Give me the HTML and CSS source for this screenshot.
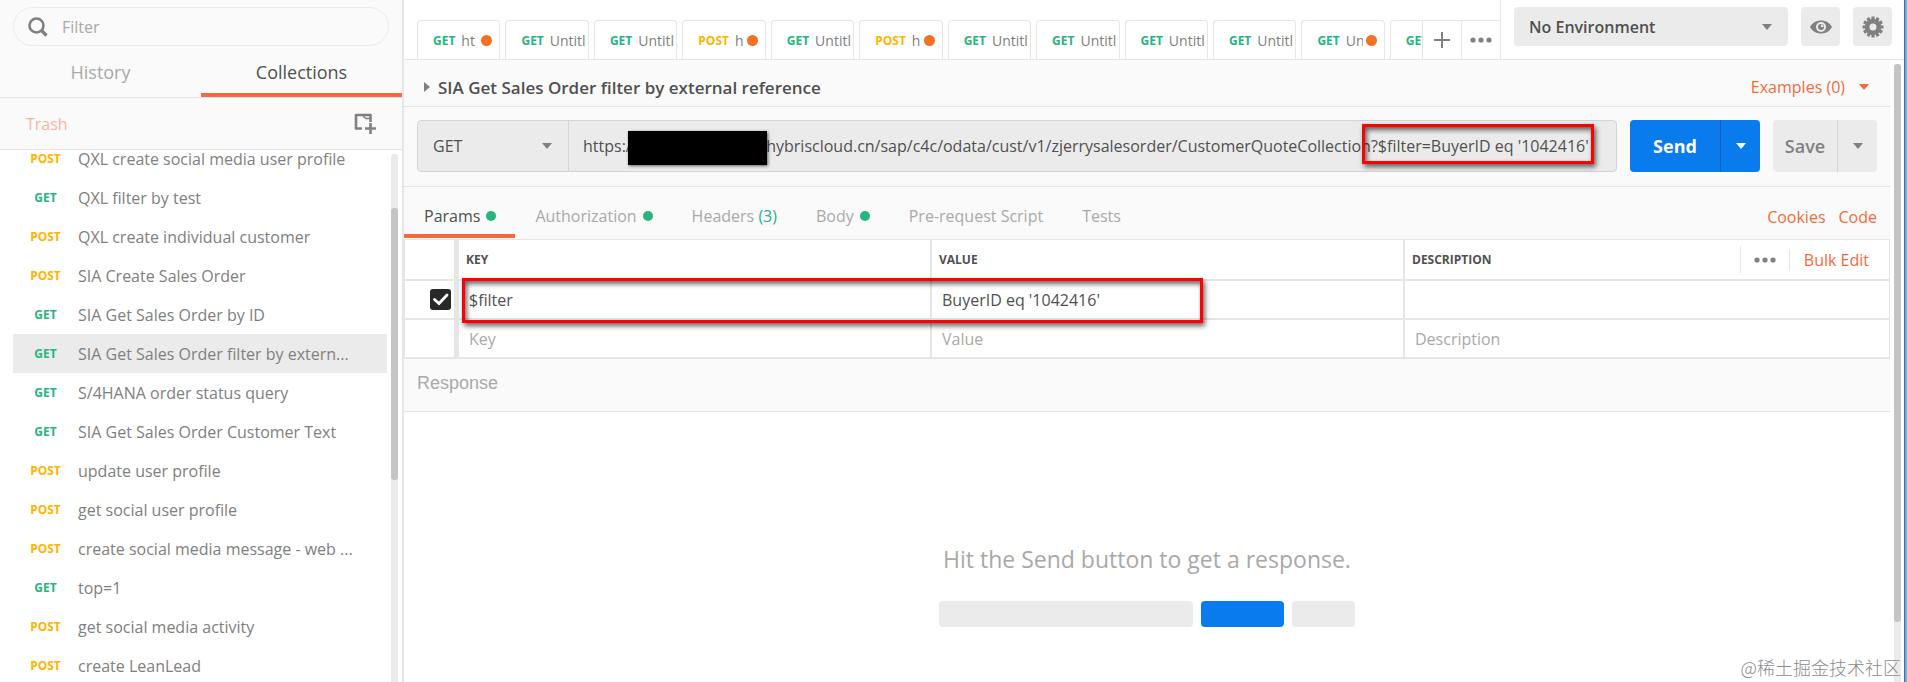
FILE: index.html
```html
<!DOCTYPE html>
<html lang="en">
<head>
<meta charset="utf-8">
<title>SIA Get Sales Order filter by external reference</title>
<link rel="stylesheet" href="styles.css">
</head>
<body>
<div class="app">
  <aside class="sidebar">
    <label class="search">
      <svg width="20" height="20" viewBox="0 0 20 20" fill="none" stroke="#808080"><circle cx="8.500" cy="8.500" r="7" stroke-width="2.600"/><path d="M13.500 13.500l5 5" stroke-width="3.200"/></svg>
      <input type="text" placeholder="Filter" aria-label="Filter">
    </label>
    <nav class="side-tabs">
      <button class="side-tab">History</button>
      <button class="side-tab side-tab-on">Collections</button>
    </nav>
    <div class="side-tools">
      <a class="trash" href="#trash">Trash</a>
      <button class="new-folder" aria-label="New collection">
        <svg width="22" height="22" viewBox="0 0 22 22" fill="none" stroke="#808080"><path d="M8 15.500H2V2H16.500V9" stroke-width="2.600" stroke-linejoin="round"/><path d="M9 3l3 2.500h4" stroke-width="1.600"/><path d="M16.500 10v11M11 15.500H22" stroke-width="2.600"/></svg>
      </button>
    </div>
    <div class="side-list">
      <ul class="requests">
        <li class="request"><span class="verb post">POST</span><span class="name">QXL create social media user profile</span></li>
        <li class="request"><span class="verb get">GET</span><span class="name">QXL filter by test</span></li>
        <li class="request"><span class="verb post">POST</span><span class="name">QXL create individual customer</span></li>
        <li class="request"><span class="verb post">POST</span><span class="name">SIA Create Sales Order</span></li>
        <li class="request"><span class="verb get">GET</span><span class="name">SIA Get Sales Order by ID</span></li>
        <li class="request request-on"><span class="verb get">GET</span><span class="name">SIA Get Sales Order filter by extern...</span></li>
        <li class="request"><span class="verb get">GET</span><span class="name">S/4HANA order status query</span></li>
        <li class="request"><span class="verb get">GET</span><span class="name">SIA Get Sales Order Customer Text</span></li>
        <li class="request"><span class="verb post">POST</span><span class="name">update user profile</span></li>
        <li class="request"><span class="verb post">POST</span><span class="name">get social user profile</span></li>
        <li class="request"><span class="verb post">POST</span><span class="name">create social media message - web ...</span></li>
        <li class="request"><span class="verb get">GET</span><span class="name">top=1</span></li>
        <li class="request"><span class="verb post">POST</span><span class="name">get social media activity</span></li>
        <li class="request"><span class="verb post">POST</span><span class="name">create LeanLead</span></li>
      </ul>
      <div class="track side-track"><div class="thumb side-thumb"></div></div>
    </div>
  </aside>

  <main class="main">
    <header class="topbar">
      <div class="tabs-area">
        <div class="tabs">
          <button class="tab"><span class="verb get">GET</span><span class="tab-name">ht</span><i class="unsaved"></i></button>
          <button class="tab"><span class="verb get">GET</span><span class="tab-name">Untitl</span></button>
          <button class="tab"><span class="verb get">GET</span><span class="tab-name">Untitl</span></button>
          <button class="tab"><span class="verb post">POST</span><span class="tab-name">h</span><i class="unsaved"></i></button>
          <button class="tab"><span class="verb get">GET</span><span class="tab-name">Untitl</span></button>
          <button class="tab"><span class="verb post">POST</span><span class="tab-name">h</span><i class="unsaved"></i></button>
          <button class="tab"><span class="verb get">GET</span><span class="tab-name">Untitl</span></button>
          <button class="tab"><span class="verb get">GET</span><span class="tab-name">Untitl</span></button>
          <button class="tab"><span class="verb get">GET</span><span class="tab-name">Untitl</span></button>
          <button class="tab"><span class="verb get">GET</span><span class="tab-name">Untitl</span></button>
          <button class="tab"><span class="verb get">GET</span><span class="tab-name">Un</span><i class="unsaved"></i></button>
          <button class="tab"><span class="verb get">GET</span></button>
        </div>
        <button class="tab-tool" aria-label="New tab"><svg width="16" height="16" viewBox="0 0 16 16" stroke="#808080" stroke-width="2"><path d="M8 0v16M0 8h16"/></svg></button>
        <button class="tab-tool tab-more" aria-label="Tab options"><svg width="22" height="6" viewBox="0 0 22 6" fill="#808080"><circle cx="3" cy="3" r="2.600"/><circle cx="11" cy="3" r="2.600"/><circle cx="19" cy="3" r="2.600"/></svg></button>
      </div>
      <div class="env">
        <div class="env-select caret"><select aria-label="Environment"><option>No Environment</option></select></div>
        <button class="square" aria-label="Environment quick look"><svg width="22" height="14" viewBox="0 0 22 14"><path fill="#808080" d="M0 7C2.500 2.500 6.500 0.500 11 0.500S19.500 2.500 22 7C19.500 11.500 15.500 13.500 11 13.500S2.500 11.500 0 7z"/><circle cx="11" cy="7" r="5" fill="#ebebeb"/><circle cx="11" cy="7" r="3" fill="#808080"/><path d="M11 7V4.500a2.500 2.500 0 0 1 2.500 2.500z" fill="#ebebeb"/></svg></button>
        <button class="square" aria-label="Settings"><svg width="22" height="22" viewBox="-11 -11 22 22"><g stroke="#808080" stroke-width="3.200"><path d="M0-10.500V-6M0 6V10.500M-10.500 0H-6M6 0H10.500"/><path d="M0-10.500V-6M0 6V10.500M-10.500 0H-6M6 0H10.500" transform="rotate(30)"/><path d="M0-10.500V-6M0 6V10.500M-10.500 0H-6M6 0H10.500" transform="rotate(60)"/></g><circle r="5.800" fill="none" stroke="#808080" stroke-width="4.600"/></svg></button>
      </div>
    </header>

    <div class="body">
      <div class="content">
        <div class="title-row">
          <h1 class="title"><svg width="6" height="10" viewBox="0 0 6 10"><path d="M0 0l6 5-6 5z" fill="#808080"/></svg>SIA Get Sales Order filter by external reference</h1>
          <button class="examples">Examples (0)<svg width="10" height="6" viewBox="0 0 10 6"><path d="M0 0h10L5 6z" fill="#f26b3a"/></svg></button>
        </div>

        <div class="url-row">
          <div class="url-box">
            <div class="method caret"><select aria-label="Method"><option>GET</option></select></div>
            <div class="url">
              <input type="text" aria-label="Request URL" value="https:/                              phybriscloud.cn/sap/c4c/odata/cust/v1/zjerrysalesorder/CustomerQuoteCollection?$filter=BuyerID eq '1042416'">
              <div class="redacted"></div>
              <div class="mark mark-url"></div>
            </div>
          </div>
          <div class="split send"><button class="split-main">Send</button><button class="split-more" aria-label="Send options"><svg width="10" height="6" viewBox="0 0 10 6"><path d="M0 0h10L5 6z" fill="currentColor"/></svg></button></div>
          <div class="split save"><button class="split-main">Save</button><button class="split-more" aria-label="Save options"><svg width="10" height="6" viewBox="0 0 10 6"><path d="M0 0h10L5 6z" fill="currentColor"/></svg></button></div>
        </div>

        <div class="sections">
          <button class="section section-on">Params<i class="dot"></i></button>
          <button class="section">Authorization<i class="dot"></i></button>
          <button class="section">Headers <span class="count">(3)</span></button>
          <button class="section">Body<i class="dot"></i></button>
          <button class="section">Pre-request Script</button>
          <button class="section">Tests</button>
          <div class="section-links"><a href="#cookies">Cookies</a><a href="#code">Code</a></div>
        </div>

        <div class="params-wrap">
          <table class="params">
            <colgroup><col class="col-check"><col class="col-key"><col class="col-value"><col></colgroup>
            <tr class="head"><td class="check"></td><th>KEY</th><th>VALUE</th>
              <th><div class="desc-head">DESCRIPTION<div class="desc-tools"><button class="more" aria-label="Columns"><svg width="22" height="6" viewBox="0 0 22 6" fill="#808080"><circle cx="3" cy="3" r="2.600"/><circle cx="11" cy="3" r="2.600"/><circle cx="19" cy="3" r="2.600"/></svg></button><button class="bulk">Bulk Edit</button></div></div></th></tr>
            <tr class="row"><td class="check"><label class="tick"><input type="checkbox" checked aria-label="Use $filter"><svg width="21" height="21" viewBox="0 0 21 21"><path d="M4.500 10.500l4.500 4L17 6" fill="none" stroke="#fff" stroke-width="2.800" stroke-linecap="round"/></svg></label></td>
              <td><input type="text" aria-label="Key" value="$filter"></td><td><input type="text" aria-label="Value" value="BuyerID eq '1042416'"></td><td><input type="text" aria-label="Description"></td></tr>
            <tr class="row"><td class="check"></td>
              <td><input type="text" placeholder="Key" aria-label="New key"></td><td><input type="text" placeholder="Value" aria-label="New value"></td><td><input type="text" placeholder="Description" aria-label="New description"></td></tr>
          </table>
          <div class="mark mark-params"></div>
        </div>

        <h2 class="response">Response</h2>
        <section class="empty">
          <p class="hint">Hit the Send button to get a response.</p>
          <div class="bars"><i class="bar bar-url"></i><i class="bar bar-send"></i><i class="bar bar-save"></i></div>
        </section>
      </div>
      <div class="track main-track"><div class="thumb main-thumb"></div></div>
    </div>
  </main>
  <div class="watermark">@稀土掘金技术社区</div>
</div>
</body>
</html>
```

FILE: styles.css
```css
* { box-sizing: border-box; }
body { margin: 0; font-family: "Open Sans", "Noto Sans", sans-serif; font-size: 16px; color: #505050; background: #fff; }
button, input, select { font: inherit; color: inherit; background: none; border: 0; margin: 0; padding: 0; outline: 0; min-width: 0; }
select { appearance: none; width: 100%; height: 100%; }
a { text-decoration: none; }
svg { display: block; flex: none; }
input::placeholder { color: #a9a9a9; opacity: 1; }

.app { position: relative; display: flex; height: 100vh; overflow: hidden; border-right: 2px solid #a0a0a0; }
.verb { font-size: 12px; font-weight: 700; }
.get { color: #26b47f; }
.post { color: #ffb400; }
.track { width: 7px; background: #ebebeb; border-radius: 3px 3px 0 0; flex: none; }
.thumb { background: #c4c4c4; border-radius: 3px; }

/* Sidebar */
.sidebar { width: 404px; flex: none; display: flex; flex-direction: column; background: #fafafa; border-right: 2px solid #e6e6e6; }
.search { display: flex; align-items: center; gap: 14px; height: 39px; margin: 7px 13px 0; padding: 0 14px; border: 1px solid #ebebeb; border-radius: 20px; }
.search input { flex: 1; }
.side-tabs { display: flex; height: 52px; border-bottom: 1px solid #e6e6e6; }
.side-tab { flex: 1; padding-top: 5px; font-size: 18px; color: #a9a9a9; border-bottom: 4px solid transparent; }
.side-tab-on { color: #505050; border-color: #f26b3a; }
.side-tools { display: flex; align-items: center; justify-content: space-between; height: 52px; padding: 0 26px; border-bottom: 1px solid #e6e6e6; flex: none; }
.trash { color: #f8b59d; }
.side-list { flex: 1; min-height: 0; display: flex; background: #fff; overflow: hidden; padding-right: 4px; }
.requests { flex: 1; margin: -11px 4px 0 13px; padding: 0; list-style: none; }
.request { display: flex; align-items: center; height: 39px; color: #808080; line-height: 18px; }
.request-on { background: #ebebeb; }
.request .verb { width: 65px; text-align: center; }
.name { white-space: nowrap; }
.side-track { margin-top: 4px; }
.side-thumb { height: 272px; margin-top: 54px; }

/* Top bar */
.main { flex: 1; min-width: 0; display: flex; flex-direction: column; border-right: 1px solid #0a7bed; }
.topbar { display: flex; height: 60px; border-bottom: 1px solid #e6e6e6; flex: none; }
.tabs-area { flex: 1; min-width: 0; display: flex; align-items: flex-end; padding-left: 13px; border-right: 1px solid #e6e6e6; }
.tabs { flex: 1; min-width: 0; display: flex; gap: 5px; overflow: hidden; }
.tab { flex: 0 0 calc(8.8% - 5px); display: flex; align-items: center; height: 39px; padding: 0 0 0 15px; border: 1px solid #e6e6e6; border-bottom: 0; border-radius: 4px 4px 0 0; overflow: hidden; }
.tab-name { flex: 1; min-width: 0; margin-left: 6px; overflow: hidden; font-size: 14px; text-align: left; color: #808080; }
.unsaved { flex: none; width: 11px; height: 11px; margin: 0 7px 0 3px; border-radius: 50%; background: #f47023; }
.tab-tool { display: grid; place-items: center; width: 39px; height: 39px; border: 1px solid #e6e6e6; border-width: 1px 0 0 1px; flex: none; }
.env { display: flex; gap: 13px; padding: 7px 12px 0 13px; }
.env-select { width: 274px; height: 39px; padding-left: 15px; border-radius: 4px; background: #ebebeb; font-weight: 600; }
.caret { position: relative; }
.caret::after { content: ""; position: absolute; right: 16px; top: 50%; margin-top: -3px; border: 5px solid transparent; border-top: 6px solid #808080; border-bottom: 0; pointer-events: none; }
.square { display: grid; place-items: center; width: 39px; height: 39px; border-radius: 4px; background: #ebebeb; }

/* Request */
.body { flex: 1; min-height: 0; display: flex; gap: 4px; padding-right: 3px; }
.content { flex: 1; min-width: 0; display: flex; flex-direction: column; background: #fafafa; }
.title-row { display: flex; align-items: center; justify-content: space-between; height: 47px; padding: 8px 21px 0 20px; border-bottom: 1px solid #e6e6e6; }
.title { display: flex; align-items: center; gap: 8px; margin: 0; font-size: 17px; font-weight: 600; }
.examples { display: flex; align-items: center; gap: 14px; color: #f26b3a; }
.url-row { display: flex; gap: 13px; height: 80px; padding: 13px; border-bottom: 1px solid #e6e6e6; }
.url-box { flex: 1; min-width: 0; display: flex; height: 52px; border: 1px solid #d4d4d4; border-radius: 4px; background: #ebebeb; }
.method { width: 151px; padding-left: 15px; border-right: 1px solid #d4d4d4; font-weight: 500; }
.url { position: relative; flex: 1; min-width: 0; padding-left: 14px; }
.url input { width: 100%; height: 100%; }
.redacted { position: absolute; left: 59px; top: 10px; width: 139px; height: 34px; background: #000; box-shadow: 1px 1px 3px #0009; }
.mark { position: absolute; border: 3px solid #f00; box-shadow: 2px 3px 5px #0009, inset 2px 3px 5px #0009; pointer-events: none; }
.mark-url { left: 793px; top: 3px; width: 232px; height: 40px; }
.split { display: flex; height: 52px; border-radius: 4px; font-size: 18px; }
.split-main { font-weight: 600; }
.split-more { display: grid; place-items: center; width: 40px; border-left: 1px solid #0003; }
.send { width: 130px; background: #097bed; color: #fff; }
.send .split-main { flex: 1; font-weight: 700; }
.save { width: 104px; background: #ebebeb; color: #808080; }
.save .split-main { flex: 1; }
.save .split-more { border-color: #d4d4d4; }

/* Sections */
.sections { display: flex; height: 52px; padding-right: 13px; }
.section { display: flex; align-items: center; padding: 10px 19px 0 20px; color: #a9a9a9; white-space: pre; border-bottom: 4px solid transparent; height: 51px; }
.section-on { color: #505050; border-color: #f26b3a; }
.dot { width: 10px; height: 10px; margin-left: 6px; border-radius: 50%; background: #26b47f; }
.count { color: #26b47f; }
.section-links { display: flex; align-items: center; gap: 13px; margin-left: auto; padding-top: 8px; }
.section-links a, .bulk { color: #f26b3a; }
.params-wrap { position: relative; }
.params { width: 100%; table-layout: fixed; border-spacing: 0; border: 1px solid #e6e6e6; border-bottom: 0; background: #fff; }
.params th, .params td { padding: 0; border-bottom: 2px solid #e6e6e6; border-right: 2px solid #e6e6e6; text-align: left; }
.params th:last-child, .params td:last-child { border-right: 0; }
.params .check { border-right: 5px solid #e6e6e6; }
.col-check { width: 54px; }
.col-key, .col-value { width: 473px; }
.head { height: 41px; font-size: 12px; }
.params th { padding-left: 7px; }
.row { height: 39px; }
.row input[type="text"] { display: block; width: 100%; padding-left: 10px; }
.desc-head { display: flex; align-items: center; justify-content: space-between; }
.desc-tools { display: flex; align-items: center; height: 27px; padding-right: 20px; border-left: 1px solid #e6e6e6; }
.more { height: 22px; padding: 0 13px; border-right: 1px solid #e6e6e6; }
.bulk { padding-left: 14px; font-size: 16px; font-weight: 400; }
.tick { display: grid; width: 21px; margin-left: 25px; }
.tick > * { grid-area: 1 / 1; }
.tick input { appearance: none; width: 21px; height: 21px; border-radius: 3px; background: #282828; }
.tick svg { position: relative; }
.mark-params { left: 58px; top: 39px; width: 741px; height: 45px; }

/* Response */
.response { display: flex; align-items: center; height: 53px; margin: 0; padding: 0 13px 3px; border-bottom: 1px solid #e6e6e6; font: 18px "Liberation Sans", Arial, sans-serif; color: #a9a9a9; }
.empty { flex: 1; display: flex; flex-direction: column; align-items: center; justify-content: center; padding-top: 74px; background: #fff; }
.hint { margin: 0 0 24px; font-size: 23px; line-height: 36px; color: #a9a9a9; }
.bars { display: flex; gap: 8px; }
.bar { height: 26px; border-radius: 4px; background: #ebebeb; }
.bar-url { width: 254px; }
.bar-send { width: 83px; background: #097bed; }
.bar-save { width: 63px; }
.main-track { margin-top: 4px; }
.main-thumb { height: 558px; }
.watermark { position: absolute; right: 4px; bottom: 2px; font-family: "Noto Sans CJK SC", sans-serif; font-weight: 300; font-size: 18px; color: #8c8c8c; }
```
